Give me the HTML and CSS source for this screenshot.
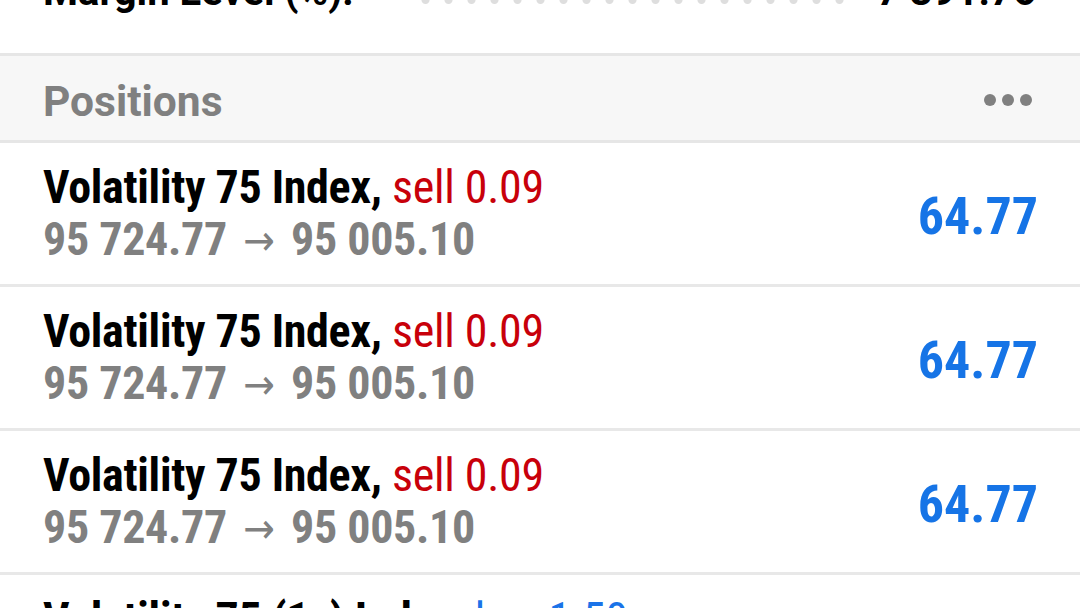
FILE: index.html
```html
<!DOCTYPE html>
<html lang="en">
<head>
    <meta charset="UTF-8">
    <meta name="viewport" content="width=device-width, initial-scale=1.0">
    <title>Trade</title>
    <link rel="stylesheet" href="styles.css">
</head>
<body>
    <div class="summary">
        <div class="summary-label">Margin Level (%):</div>
        <div class="summary-dots"></div>
        <div class="summary-value">7 391.76</div>
    </div>

    <div class="section-head">
        <div class="section-title">Positions</div>
        <div class="more">
            <span></span><span></span><span></span>
        </div>
    </div>

    <div class="position">
        <div class="pos-info">
            <div class="pos-name">Volatility 75 Index, <span class="sell">sell 0.09</span></div>
            <div class="pos-price">95 724.77 <span class="arrow">&rarr;</span> 95 005.10</div>
        </div>
        <div class="pos-profit">64.77</div>
    </div>
    <div class="position">
        <div class="pos-info">
            <div class="pos-name">Volatility 75 Index, <span class="sell">sell 0.09</span></div>
            <div class="pos-price">95 724.77 <span class="arrow">&rarr;</span> 95 005.10</div>
        </div>
        <div class="pos-profit">64.77</div>
    </div>
    <div class="position">
        <div class="pos-info">
            <div class="pos-name">Volatility 75 Index, <span class="sell">sell 0.09</span></div>
            <div class="pos-price">95 724.77 <span class="arrow">&rarr;</span> 95 005.10</div>
        </div>
        <div class="pos-profit">64.77</div>
    </div>
    <div class="position">
        <div class="pos-info">
            <div class="pos-name">Volatility 75 (1s) Index, <span class="buy">buy 1.50</span></div>
            <div class="pos-price">95 724.77 <span class="arrow">&rarr;</span> 95 005.10</div>
        </div>
        <div class="pos-profit">64.77</div>
    </div>
</body>
</html>
```

FILE: styles.css
```css
html, body {
    margin: 0;
    height: 100%;
    overflow: hidden;
    background: #fff;
}
body {
    font-family: "Roboto Condensed", "Liberation Sans Narrow", "DejaVu Sans Condensed", Roboto, sans-serif;
}

/* top summary line, cut by the window edge */
.summary {
    display: flex;
    align-items: flex-start;
    height: 53px;
    padding: 0 44px 0 43px;
    border-bottom: 3px solid #e6e6e6;
    overflow: hidden;
}
.summary-label,
.summary-value {
    font-family: Roboto, sans-serif;
    font-weight: bold;
    font-size: 40px;
    line-height: 40px;
    margin-top: -28px;
    color: #000;
}
.summary-dots {
    flex: 1;
    height: 10px;
    margin: -5px 24px 0 60px;
    background-image: radial-gradient(circle, #dedede 3.5px, transparent 4.5px);
    background-size: 23px 10px;
    background-position: left center;
}

/* section header */
.section-head {
    display: flex;
    align-items: center;
    justify-content: space-between;
    height: 84px;
    padding: 0 48px 0 43px;
    background: #f7f7f7;
    border-bottom: 3px solid #e6e6e6;
}
.section-title {
    font-family: Roboto, sans-serif;
    font-weight: bold;
    font-size: 42.5px;
    color: #808080;
    margin-top: 6px;
}
.more {
    display: flex;
    gap: 6px;
    margin-top: 4px;
}
.more span {
    width: 12px;
    height: 12px;
    border-radius: 50%;
    background: #808080;
}

/* position rows */
.position {
    display: flex;
    align-items: center;
    justify-content: space-between;
    height: 141px;
    padding: 0 42px 0 43px;
    border-bottom: 3px solid #e8e8e8;
}
.pos-name,
.pos-price {
    font-size: 46px;
    line-height: 52px;
    font-weight: bold;
    letter-spacing: -0.3px;
    white-space: nowrap;
}
.pos-name {
    color: #000;
}
.pos-name .sell {
    color: #c8000a;
    font-weight: normal;
}
.pos-name .buy {
    color: #1a73e8;
    font-weight: normal;
}
.pos-price {
    color: #808080;
}
.pos-price .arrow {
    font-weight: normal;
    font-size: 42px;
    margin: 0 6px;
}
.pos-profit {
    font-size: 52px;
    font-weight: bold;
    color: #1674e6;
    margin-top: 6px;
}
```
